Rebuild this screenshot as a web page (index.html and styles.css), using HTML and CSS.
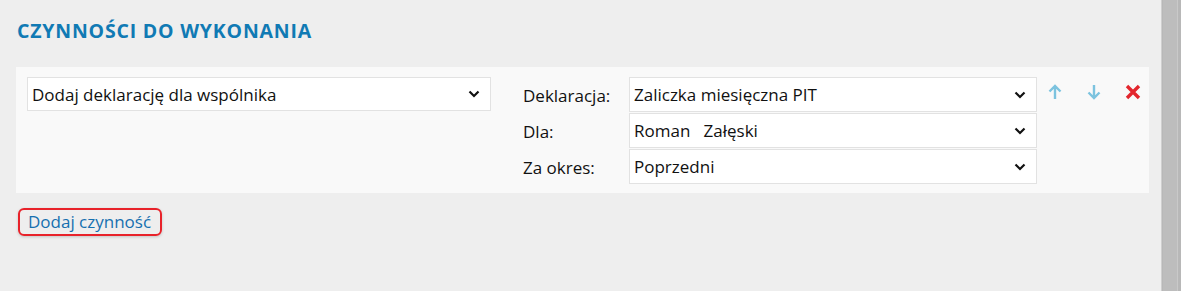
FILE: index.html
```html
<!DOCTYPE html>
<html lang="pl">
<head>
<meta charset="utf-8">
<title>Czynności do wykonania</title>
<link rel="stylesheet" href="styles.css">
</head>
<body>
<div class="page">
  <main class="content">
    <h2 class="title">CZYNNOŚCI DO WYKONANIA</h2>
    <section class="panel">
      <div class="col-action">
        <div class="select select-wide">
          <span>Dodaj deklarację dla wspólnika</span>
          <svg class="chev" width="12" height="8" viewBox="0 0 12 8"><path d="M1.5 1.5 L6 6 L10.5 1.5" fill="none" stroke="#111" stroke-width="2.2"/></svg>
        </div>
      </div>
      <div class="params">
        <div class="label">Deklaracja:</div>
        <div class="select">
          <span>Zaliczka miesięczna PIT</span>
          <svg class="chev" width="12" height="8" viewBox="0 0 12 8"><path d="M1.5 1.5 L6 6 L10.5 1.5" fill="none" stroke="#111" stroke-width="2.2"/></svg>
        </div>
        <div class="label">Dla:</div>
        <div class="select">
          <span>Roman&nbsp;&nbsp; Załęski</span>
          <svg class="chev" width="12" height="8" viewBox="0 0 12 8"><path d="M1.5 1.5 L6 6 L10.5 1.5" fill="none" stroke="#111" stroke-width="2.2"/></svg>
        </div>
        <div class="label">Za okres:</div>
        <div class="select">
          <span>Poprzedni</span>
          <svg class="chev" width="12" height="8" viewBox="0 0 12 8"><path d="M1.5 1.5 L6 6 L10.5 1.5" fill="none" stroke="#111" stroke-width="2.2"/></svg>
        </div>
      </div>
      <div class="tools">
        <button class="tool" aria-label="W górę">
          <svg width="16" height="16" viewBox="0 0 16 16"><path d="M8 15 V2 M2.5 7.5 L8 2 L13.5 7.5" fill="none" stroke="#7cc3df" stroke-width="2.4"/></svg>
        </button>
        <button class="tool" aria-label="W dół">
          <svg width="16" height="16" viewBox="0 0 16 16"><path d="M8 1 V14 M2.5 8.5 L8 14 L13.5 8.5" fill="none" stroke="#7cc3df" stroke-width="2.4"/></svg>
        </button>
        <button class="tool" aria-label="Usuń">
          <svg width="16" height="16" viewBox="0 0 16 16"><path d="M2 2 L14 14 M14 2 L2 14" fill="none" stroke="#e3262d" stroke-width="3.4"/></svg>
        </button>
      </div>
    </section>
    <a class="add-link" href="#">Dodaj czynność</a>
  </main>
  <div class="scrollbar"><div class="thumb"></div></div>
</div>
</body>
</html>
```

FILE: styles.css
```css
* { box-sizing: border-box; }
html, body {
  margin: 0;
  height: 100%;
  background: #eeeeee;
  font-family: "Open Sans", "Noto Sans", "Liberation Sans", sans-serif;
  color: #111;
}
.page {
  display: flex;
  height: 291px;
  overflow: hidden;
}
.content {
  flex: 1;
  padding: 16px 12px 0 16px;
}
.title {
  margin: 0 0 0 1px;
  font-size: 19.5px;
  font-weight: 700;
  color: #107ab4;
  line-height: 30px;
  letter-spacing: 0.8px;
}
.panel {
  margin-top: 21px;
  background: #f9f9f9;
  display: flex;
  align-items: flex-start;
  padding: 10px 8px 8px 11px;
  height: 126px;
}
.col-action {
  width: 464px;
}
.select {
  background: #fff;
  border: 1px solid #e2e2e2;
  height: 35px;
  display: flex;
  align-items: center;
  justify-content: space-between;
  padding: 0 10px 0 4px;
  font-size: 17px;
  white-space: nowrap;
}
.select-wide {
  height: 34px;
}
.chev { flex: none; }
.params {
  margin-left: 32px;
  display: grid;
  grid-template-columns: 106px 408px;
  row-gap: 1px;
  align-items: center;
}
.label {
  font-size: 17px;
  padding-top: 2px;
}
.tools {
  display: flex;
  gap: 23px;
  margin-left: 10px;
  padding-top: 7px;
}
.tool {
  border: 0;
  background: none;
  padding: 0;
  width: 16px;
  height: 16px;
  display: block;
  cursor: pointer;
}
.tool svg { display: block; }
.add-link {
  display: inline-block;
  margin-top: 15px;
  margin-left: 2px;
  padding: 0 9px 0 8px;
  height: 28px;
  line-height: 24px;
  border: 2px solid #e8222a;
  border-radius: 6px;
  box-shadow: 0 1px 3px rgba(0,0,0,0.18);
  color: #1670b0;
  font-size: 17px;
  text-decoration: none;
}
.scrollbar {
  width: 20px;
  flex: none;
  background: #b8b8b8;
  padding: 0 3px 0 1px;
  border-left: 1px solid #cfcfcf;
}
.thumb {
  height: 100%;
  background: #bdbdbd;
  border-right: 1px solid #c9c9c9;
}
```
